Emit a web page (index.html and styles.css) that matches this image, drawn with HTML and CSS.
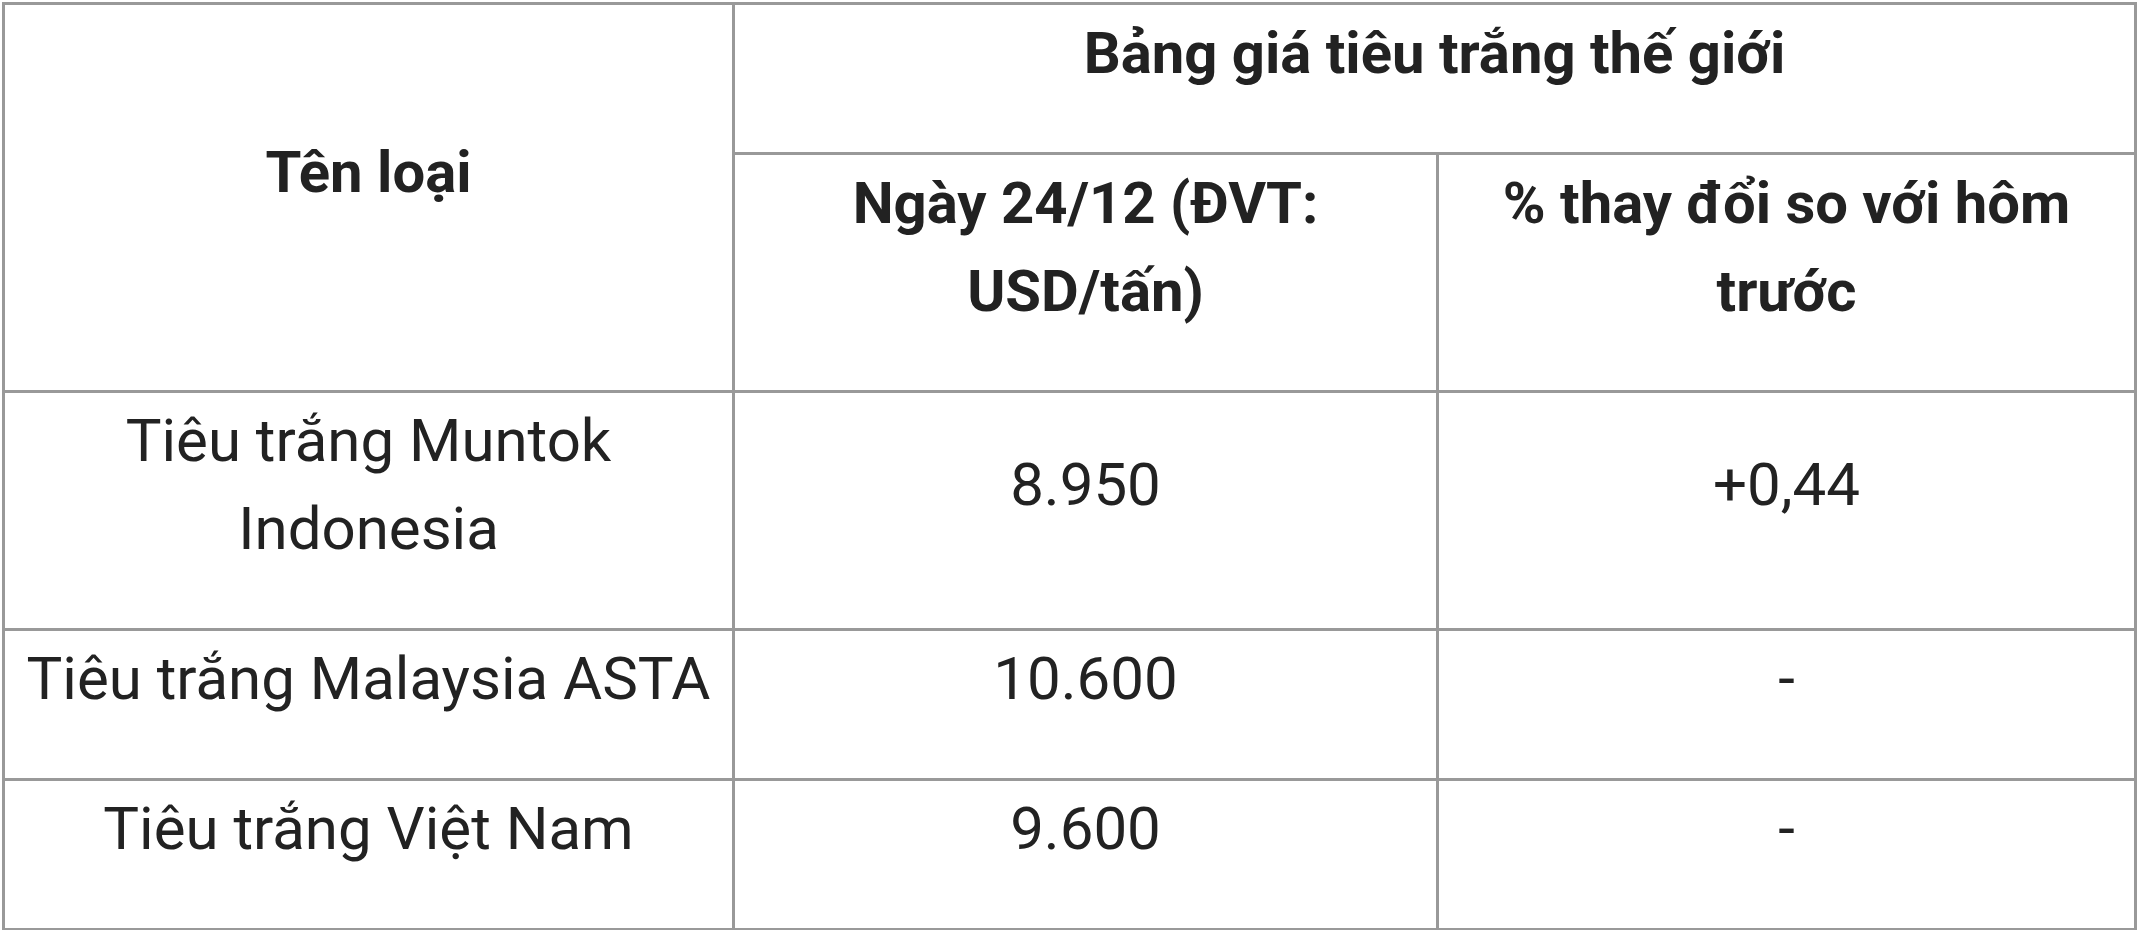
FILE: index.html
```html
<!DOCTYPE html>
<html lang="vi">
<head>
<meta charset="utf-8">
<title>Bảng giá tiêu trắng thế giới</title>
<link rel="stylesheet" href="styles.css">
</head>
<body>
<table class="price-table">
  <colgroup>
    <col class="col-name">
    <col class="col-price">
    <col class="col-change">
  </colgroup>
  <thead>
    <tr>
      <th rowspan="2" class="head">Tên loại</th>
      <th colspan="2" class="head">Bảng giá tiêu trắng thế giới</th>
    </tr>
    <tr>
      <th class="head">Ngày 24/12 (ĐVT: USD/tấn)</th>
      <th class="head">% thay đổi so với hôm trước</th>
    </tr>
  </thead>
  <tbody>
    <tr>
      <td>Tiêu trắng Muntok Indonesia</td>
      <td>8.950</td>
      <td>+0,44</td>
    </tr>
    <tr>
      <td>Tiêu trắng Malaysia ASTA</td>
      <td>10.600</td>
      <td>-</td>
    </tr>
    <tr>
      <td>Tiêu trắng Việt Nam</td>
      <td>9.600</td>
      <td>-</td>
    </tr>
  </tbody>
</table>
</body>
</html>
```
FILE: styles.css
```css
html, body {
  background: #ffffff;
}
body {
  margin: 2px 1px 0 2px;
  font-family: Roboto, "Noto Sans", sans-serif;
  color: #222222;
}
.price-table {
  width: 100%;
  table-layout: fixed;
  border-collapse: separate;
  border-spacing: 0;
  border-top: 3px solid #999999;
  border-left: 3px solid #999999;
}
.col-name { width: 730px; }
.col-price { width: 704px; }
.col-change { width: 698px; }
.price-table th,
.price-table td {
  border-right: 3px solid #999999;
  border-bottom: 3px solid #999999;
  padding: 4px 8px 55px;
  font-size: 60px;
  line-height: 88px;
  text-align: center;
  vertical-align: middle;
}
.price-table th {
  font-size: 58px;
  font-weight: 700;
}
.price-table td {
  font-weight: 400;
}
```
